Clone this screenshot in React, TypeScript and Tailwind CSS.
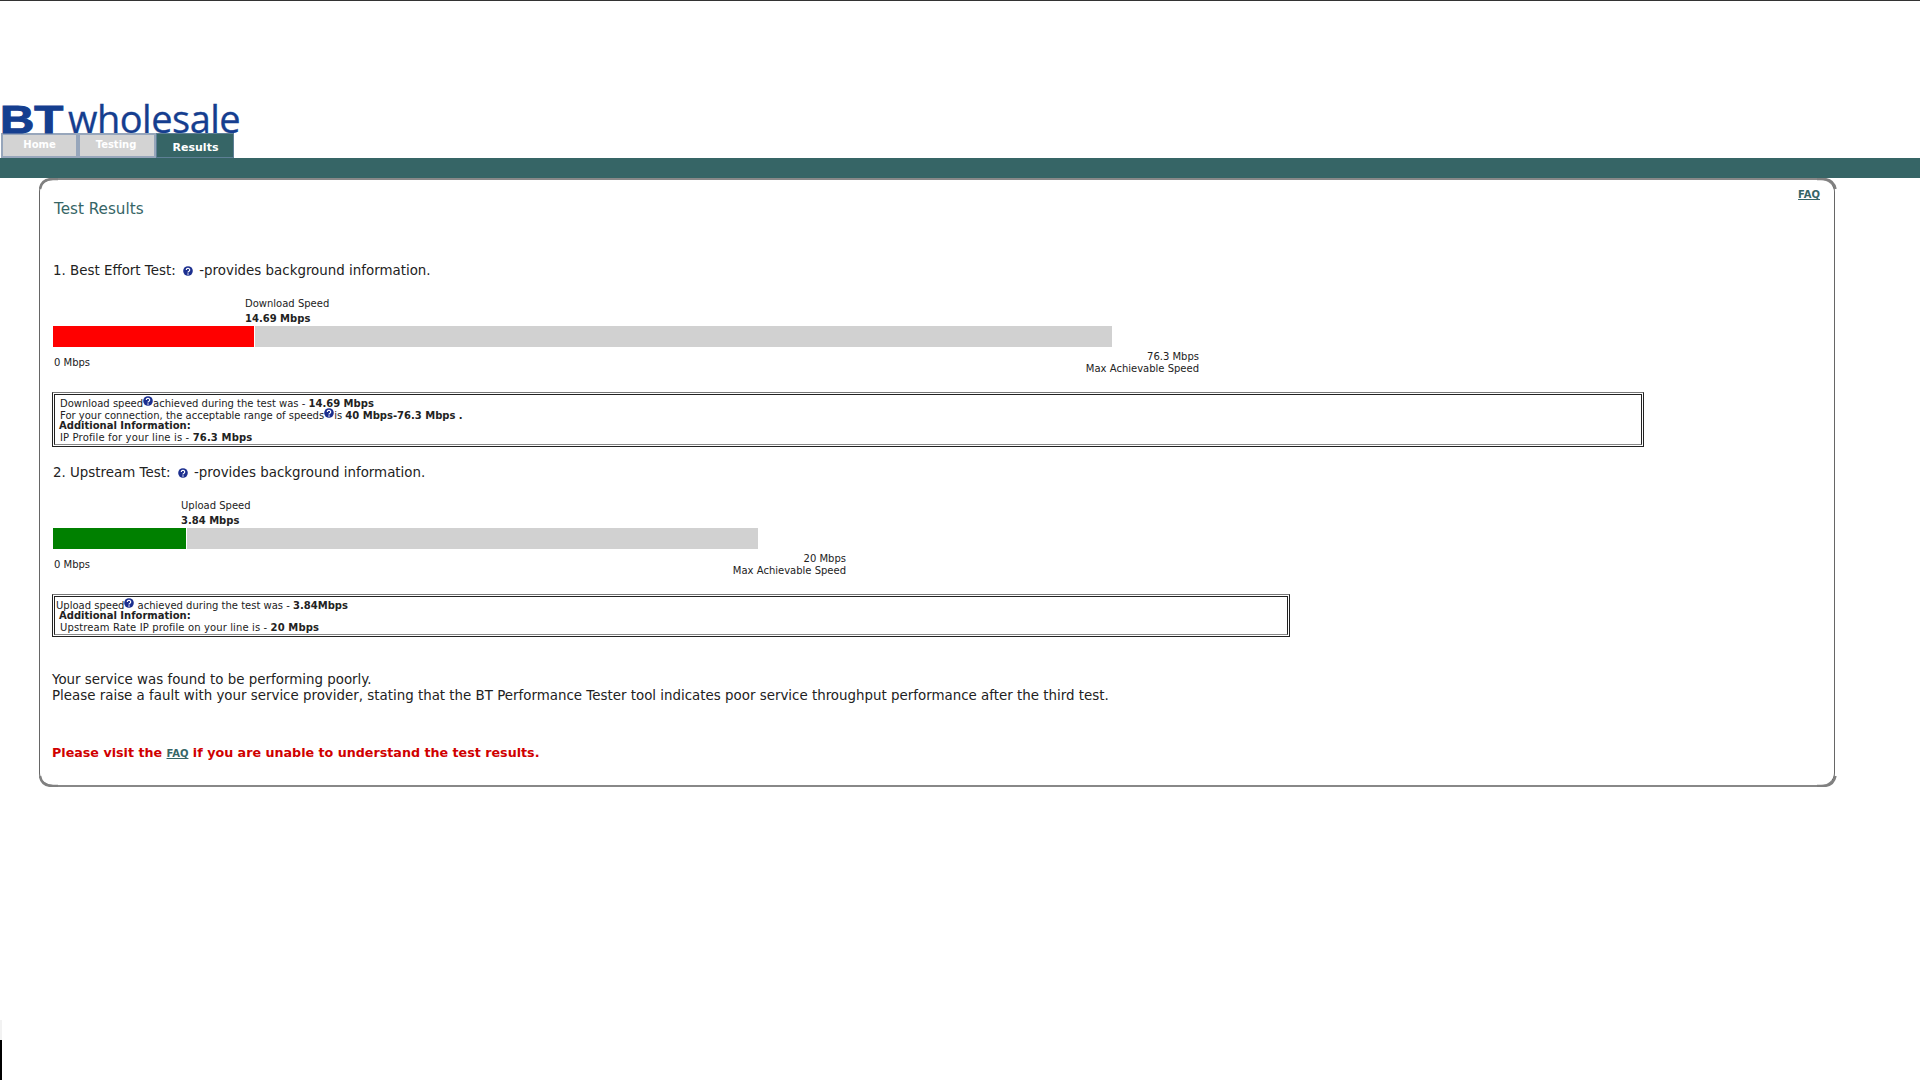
const font = { fontFamily: '"DejaVu Sans", Verdana, sans-serif' };

function Help({ className = "" }: { className?: string }) {
  return (
    <svg viewBox="0 0 10 10" className={`inline-block w-[10px] h-[10px] ${className}`}>
      <circle cx="5" cy="5" r="4.8" fill="#1c2f8f" />
      <path d="M3.3 3.9a1.7 1.6 0 1 1 2.7 1.3c-.7.4-1 .7-1 1.2" fill="none" stroke="#fff" strokeWidth="1.2" />
      <circle cx="5" cy="7.9" r=".75" fill="#fff" />
    </svg>
  );
}

function Speed({ label, value, offset, fill, fillWidth, trackWidth, max, endWidth }: { label: string; value: string; offset: string; fill: string; fillWidth: string; trackWidth: string; max: string; endWidth: string }) {
  return (
    <div className="text-[10px] text-[#222]">
      <div className={`${offset} h-[30px] leading-[15px]`}>
        <div>{label}</div>
        <div className="font-bold">{value}</div>
      </div>
      <div className={`flex h-[21px] ${trackWidth}`}>
        <div className={`${fill} ${fillWidth} h-full`} />
        <div className="w-px h-full" />
        <div className="flex-1 h-full bg-[#d1d1d1]" />
      </div>
      <div className={`flex justify-between ${endWidth} leading-[12px] pl-px`}>
        <div className="pt-[10px]">0 Mbps</div>
        <div className="text-right pt-[4px]">
          <div>{max}</div>
          <div>Max Achievable Speed</div>
        </div>
      </div>
    </div>
  );
}

function Box({ width, className = "", children }: { width: string; className?: string; children: React.ReactNode }) {
  return (
    <div className={`${width} -ml-px border border-[#222] border-t-[#777] p-px`}>
      <div className={`border border-[#222] border-b-[#888] text-[10px] leading-[12px] text-[#222] ${className}`}>{children}</div>
    </div>
  );
}

function Corner({ className, d }: { className: string; d: string }) {
  return (
    <svg viewBox="0 0 20 12" className={`absolute w-[20px] h-[12px] ${className}`}>
      <path d={d} fill="none" stroke="#808080" strokeWidth="2.5" strokeLinecap="butt" />
    </svg>
  );
}

export default function App() {
  return (
    <div className="relative h-screen overflow-hidden bg-white" style={font}>
      <div className="h-px bg-[#333]" />
      <header className="h-[132px] flex items-end pb-px">
        <div className="flex items-baseline text-[#153e8f] leading-[28px] h-[28px]">
          <span className="text-[38px] font-bold scale-x-125 origin-left w-[68px] [-webkit-text-stroke:1px_#153e8f]" style={{ fontFamily: '"Liberation Sans", sans-serif' }}>BT</span>
          <span className="text-[38px] tracking-[-0.5px] [-webkit-text-stroke:0.3px_#153e8f]" style={{ fontFamily: '"Open Sans", sans-serif' }}>wholesale</span>
        </div>
      </header>
      <nav className="flex h-[25px] pl-px">
        <div className="w-[77px] h-full bg-[#d3d3d3] border-2 border-[#97a6bb] text-white text-[10px] font-bold text-center leading-[20px]">Home</div>
        <div className="w-[78px] h-full bg-[#d3d3d3] border-2 border-[#97a6bb] text-white text-[10px] font-bold text-center leading-[20px] pr-[2px]">Testing</div>
        <div className="w-[78px] h-full bg-[#366566] border border-[#5d7f95] text-white text-[11px] font-bold text-center leading-[27px] pl-px">Results</div>
      </nav>
      <div className="h-[20px] bg-[#366566]" />
      <main className="relative ml-[39px] w-[1796px] h-[609px] border-x border-y-2 border-x-[#666] border-y-[#888] rounded-[14px] pl-[13px] pr-[13px]">
        <Corner className="-right-[3px] -top-[2px]" d="M0 1H6C13 1 17 4 18.5 11" />
        <Corner className="-right-[3px] -bottom-[2px]" d="M0 11H6C13 11 17 8 18.5 1" />
        <Corner className="-left-[1px] -top-[2px]" d="M19 1H14C7 1 2 4 1 11" />
        <Corner className="-left-[1px] -bottom-[2px]" d="M19 11H14C7 11 2 8 1 1" />
        <a className="absolute right-[14px] top-[7px] text-[10px] font-bold text-[#366566] underline">FAQ</a>
        <h1 className="text-[15.2px] leading-[17px] text-[#366566] pt-[21px] pl-px h-[35px] box-content">Test Results</h1>
        <p className="text-[13.4px] leading-[16px] text-[#222] mt-[27px] mb-[17px]">1. Best Effort Test: <Help className="ml-[3px] mr-[2px] align-[-1px]" /> -provides background information.</p>
        <Speed label="Download Speed" value="14.69 Mbps" offset="ml-[192px]" fill="bg-[#ff0000]" fillWidth="w-[201px]" trackWidth="w-[1059px]" max="76.3 Mbps" endWidth="w-[1146px]" />
        <div className="mt-[17px]">
          <Box width="w-[1592px]" className="pt-px">
            <div className="pl-[5px] h-[12px]">Download speed<Help className="align-[1px]" />achieved during the test was - <b>14.69 Mbps</b></div>
            <div className="pl-[5px] h-[12px]">For your connection, the acceptable range of speeds<Help className="align-[1px]" />is <b>40 Mbps-76.3 Mbps</b> <b>.</b></div>
            <div className="pl-[4px] font-bold">Additional Information:</div>
            <div className="pl-[5px] tracking-[0.15px]">IP Profile for your line is - <b>76.3 Mbps</b></div>
          </Box>
        </div>
        <p className="text-[13.4px] leading-[16px] text-[#222] mt-[18px] mb-[17px]">2. Upstream Test: <Help className="ml-[3px] mr-[2px] align-[-1px]" /> -provides background information.</p>
        <Speed label="Upload Speed" value="3.84 Mbps" offset="ml-[128px]" fill="bg-[#008000]" fillWidth="w-[133px]" trackWidth="w-[705px]" max="20 Mbps" endWidth="w-[793px]" />
        <div className="mt-[17px]">
          <Box width="w-[1238px]" className="pt-px">
            <div className="pl-[1px] h-[12px]">Upload speed<Help className="align-[1px]" /> achieved during the test was - <b>3.84Mbps</b></div>
            <div className="pl-[4px] font-bold">Additional Information:</div>
            <div className="pl-[5px] tracking-[0.12px]">Upstream Rate IP profile on your line is - <b>20 Mbps</b></div>
          </Box>
        </div>
        <div className="text-[13.4px] leading-[16px] text-[#222] mt-[35px] -ml-px">
          <p>Your service was found to be performing poorly.</p>
          <p>Please raise a fault with your service provider, stating that the BT Performance Tester tool indicates poor service throughput performance after the third test.</p>
        </div>
        <p className="text-[12.7px] leading-[16px] font-bold text-[#d00000] mt-[41px] -ml-px">Please visit the <a className="text-[10px] text-[#366566] underline">FAQ</a> if you are unable to understand the test results.</p>
      </main>
      <div className="absolute left-0 bottom-[40px] w-[2px] h-[20px] bg-[#f2f2f2]" />
      <div className="absolute left-0 bottom-0 w-[2px] h-[40px] bg-black" />
    </div>
  );
}
